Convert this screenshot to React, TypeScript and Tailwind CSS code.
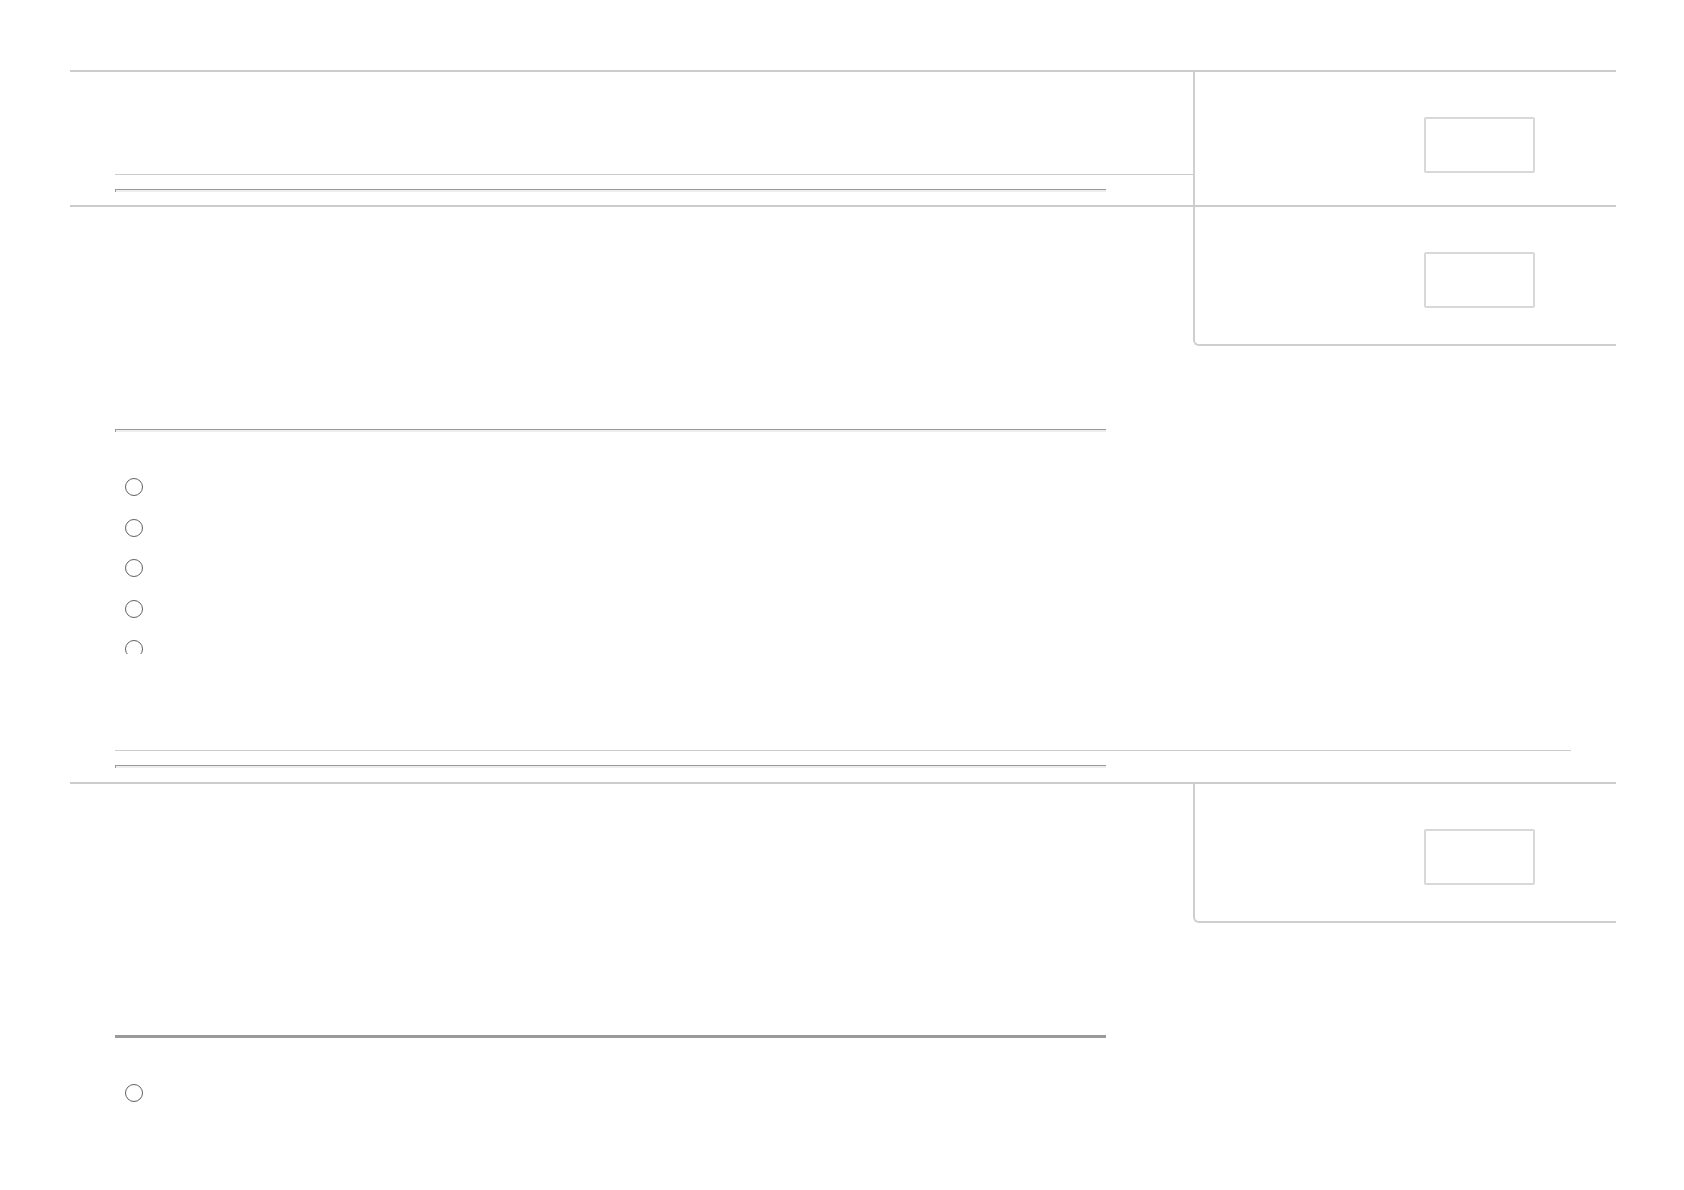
import React from "react";

const Bar = ({ dark }: { dark?: boolean }) => (
  <div
    className={
      dark
        ? "h-[3px] w-[991px] bg-[#9a9a9a]"
        : "h-[3px] w-[991px] bg-[#eeeeee] border-t border-l border-[#9a9a9a]"
    }
  />
);

const Radio = () => (
  <div className="ml-[10px] h-[18px] w-[18px] shrink-0 rounded-full border-[1.5px] border-[#616161]" />
);

const Panel = ({ rounded }: { rounded?: boolean }) => (
  <div
    className={
      rounded
        ? "w-[423px] shrink-0 self-start h-[139px] border-l-2 border-b-2 border-[#cfcfcf] rounded-bl-md pt-[45px] pl-[229px]"
        : "w-[423px] shrink-0 border-l-2 border-[#cfcfcf] pt-[45px] pl-[229px]"
    }
  >
    <div className="h-[56px] w-[111px] rounded-[2px] border-2 border-[#d8d8d8] bg-white" />
  </div>
);

export default function App() {
  return (
    <div className="min-h-[1190px] bg-white pt-[70px] pl-[70px] pr-[68px] overflow-hidden font-['Liberation_Sans',sans-serif]">
      {/* item 1 */}
      <div className="flex border-t-2 border-[#cccccc]">
        <div className="flex-1 h-[133px] pl-[45px] pt-[102px]">
          <div className="border-t border-[#cccccc]" />
          <div className="mt-[14px]">
            <Bar />
          </div>
        </div>
        <Panel />
      </div>

      {/* item 2 */}
      <div className="border-t-2 border-[#cccccc]">
        <div className="flex">
          <div className="flex-1 pl-[45px] pt-[222px]">
            <Bar />
            <div className="mt-[46px] flex h-[176px] flex-col gap-[22.5px] overflow-hidden">
              <Radio />
              <Radio />
              <Radio />
              <Radio />
              <Radio />
              <Radio />
            </div>
          </div>
          <Panel rounded />
        </div>
        <div className="px-[45px] pt-[96px] pb-[14px]">
          <div className="border-t border-[#cccccc]" />
          <div className="mt-[14px]">
            <Bar />
          </div>
        </div>
      </div>

      {/* item 3 */}
      <div className="border-t-2 border-[#cccccc]">
        <div className="flex">
          <div className="flex-1 pl-[45px] pt-[251px]">
            <Bar dark />
            <div className="mt-[46px] flex flex-col gap-[22.5px]">
              <Radio />
            </div>
          </div>
          <Panel rounded />
        </div>
      </div>
    </div>
  );
}
